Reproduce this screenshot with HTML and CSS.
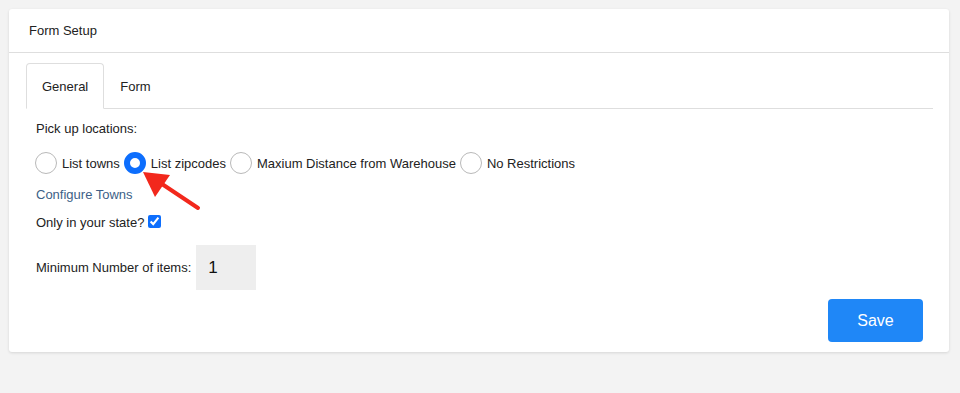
FILE: index.html
```html
<!DOCTYPE html>
<html lang="en">
<head>
  <meta charset="UTF-8" />
  <title>Form Setup</title>
  <link rel="stylesheet" href="styles.css">
</head>
<body>
  <div class="card">
    <div class="card-header">Form Setup</div>

    <div class="card-body">
      <ul class="tabs">
        <li class="tab active">General</li>
        <li class="tab">Form</li>
      </ul>

      <div class="tab-content">
        <p class="label">Pick up locations:</p>

        <div class="radios">
          <label><input type="radio" name="pickup"> List towns</label>
          <label><input type="radio" name="pickup" checked> List zipcodes</label>
          <label><input type="radio" name="pickup"> Maxium Distance from Warehouse</label>
          <label><input type="radio" name="pickup"> No Restrictions</label>
        </div>

        <a class="configure" href="#">Configure Towns</a>

        <label class="state">Only in your state? <input type="checkbox" checked></label>

        <div class="min-items">
          <span>Minimum Number of items:</span>
          <input type="text" value="1">
        </div>

        <div class="actions">
          <button class="save">Save</button>
        </div>
      </div>
    </div>
  </div>

  <!-- flecha de anotación -->
  <svg class="arrow" width="70" height="50" viewBox="0 0 70 50">
    <line x1="61" y1="42" x2="22" y2="16" stroke="#f2281c" stroke-width="4" stroke-linecap="round" />
    <polygon points="6,6 33,9 18,31" fill="#f2281c" />
  </svg>
</body>
</html>
```

FILE: styles.css
```css
* {
  box-sizing: border-box;
  margin: 0;
  padding: 0;
}

body {
  background: #f3f3f3;
  font-family: 'Liberation Sans', Arial, sans-serif;
  font-size: 13px;
  color: #222;
  height: 393px;
  padding: 9px;
}

.card {
  background: #fff;
  border-radius: 3px;
  box-shadow: 0 1px 3px rgba(0, 0, 0, 0.12);
  width: 940px;
  height: 343px;
}

.card-header {
  height: 44px;
  padding: 0 20px;
  display: flex;
  align-items: center;
  border-bottom: 1px solid #dedede;
}

.card-body {
  padding: 10px 16px 0 17px;
}

.tabs {
  list-style: none;
  display: flex;
  border-bottom: 1px solid #dedede;
  height: 46px;
}

.tab {
  padding: 0 15px;
  height: 46px;
  display: flex;
  align-items: center;
  border: 1px solid transparent;
  border-radius: 4px 4px 0 0;
  margin-bottom: -1px;
}

.tab.active {
  border-color: #dedede #dedede #fff;
  background: #fff;
}

.tab-content {
  padding: 12px 10px 0 10px;
}

.label {
  height: 16px;
  line-height: 16px;
}

.radios {
  display: flex;
  align-items: center;
  margin-top: 15px;
  margin-left: -1px;
}

.radios label {
  display: flex;
  align-items: center;
  margin-right: 4px;
}

.radios input {
  appearance: none;
  width: 22px;
  height: 22px;
  border-radius: 50%;
  border: 1px solid #b9b9b9;
  background: #fff;
  margin-right: 5px;
}

.radios input:checked {
  border: 6px solid #0d6efd;
}

.configure {
  display: block;
  color: #3d5f87;
  text-decoration: none;
  margin-top: 13px;
  line-height: 16px;
}

.state {
  display: flex;
  align-items: center;
  gap: 4px;
  margin-top: 12px;
  line-height: 16px;
}

.state input {
  width: 13px;
  height: 13px;
  accent-color: #0d6efd;
  margin-top: -4px;
}

.min-items {
  display: flex;
  align-items: center;
  gap: 5px;
  margin-top: 14px;
}

.min-items input {
  width: 60px;
  height: 45px;
  border: none;
  background: #eeeeee;
  font-family: 'Liberation Sans', Arial, sans-serif;
  font-size: 17px;
  padding-left: 12px;
  color: #111;
}

.actions {
  display: flex;
  justify-content: flex-end;
  margin-top: 9px;
}

.save {
  width: 95px;
  height: 43px;
  border: none;
  border-radius: 4px;
  background: #1f87f7;
  color: #fff;
  font-family: 'Liberation Sans', Arial, sans-serif;
  font-size: 16px;
}

.arrow {
  position: absolute;
  left: 137px;
  top: 166px;
}
```
